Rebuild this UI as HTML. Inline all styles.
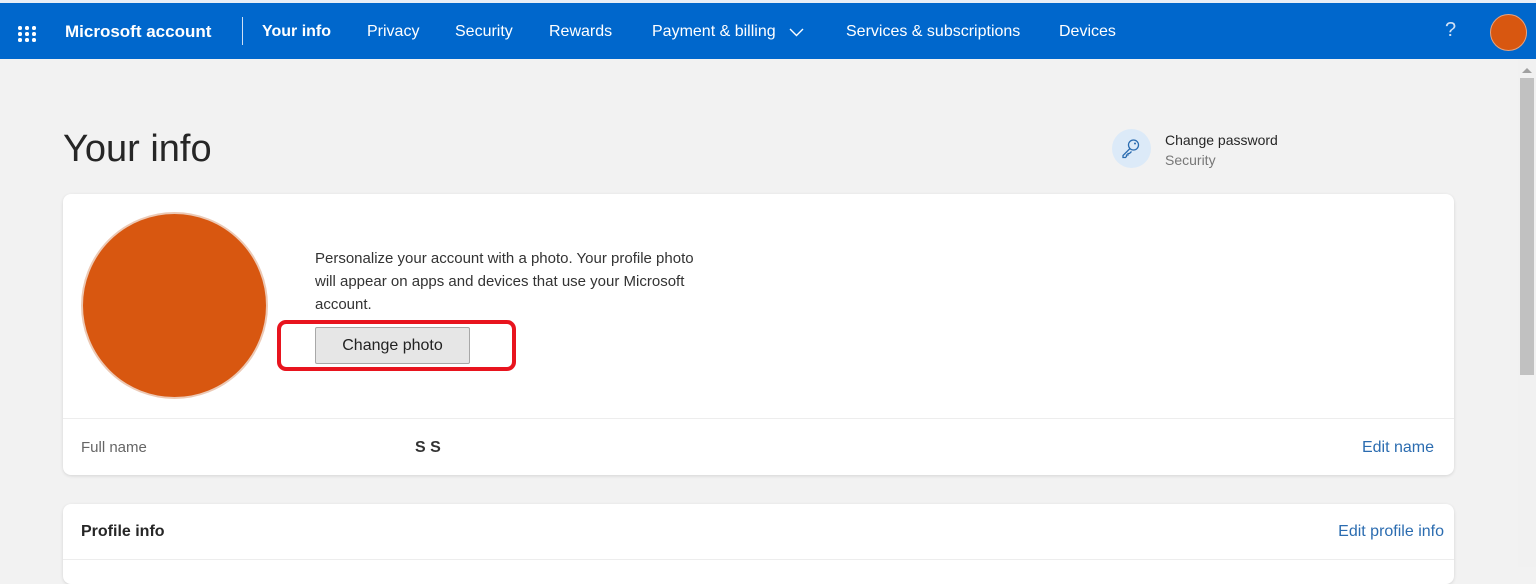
<!DOCTYPE html>
<html><head><style>
*{margin:0;padding:0;box-sizing:border-box}
body{width:1536px;height:567px;overflow:hidden;background:#f2f2f2;font-family:"Liberation Sans",sans-serif;position:relative;color:#1b1b1b}
.top{position:absolute;left:0;top:0;width:1536px;height:3px;background:#e8eef6}
.nav{position:absolute;left:0;top:3px;width:1536px;height:56px;background:#0067cc;color:#fff}
.nav span{position:absolute;top:20px;font-size:16px;white-space:nowrap}
.dots{position:absolute;left:18px;top:23px;width:18px;height:18px}
.dots i{position:absolute;width:3.5px;height:3.5px;background:#fff;border-radius:50%}
.sep{position:absolute;left:242px;top:14px;width:1px;height:28px;background:#cfe0f5}
.av{position:absolute;left:1490px;top:11px;width:37px;height:37px;border-radius:50%;background:#d85710;border:1px solid #e8a27c}
.sb{position:absolute;left:1518px;top:59px;width:18px;height:508px;background:#f1f1f1}
.thumb{position:absolute;left:1520px;top:78px;width:14px;height:297px;background:#c1c1c1}
.card{position:absolute;left:63px;width:1391px;background:#fff;border-radius:8px;box-shadow:0 1px 3px rgba(0,0,0,.12)}
.t{position:absolute;white-space:nowrap}
.link{color:#2b6cb0;font-size:16px}
</style></head><body>
<div class="top"></div>
<div class="nav">
<div class="dots">
<i style="left:0;top:0"></i><i style="left:7px;top:0"></i><i style="left:14px;top:0"></i>
<i style="left:0;top:6px"></i><i style="left:7px;top:6px"></i><i style="left:14px;top:6px"></i>
<i style="left:0;top:12px"></i><i style="left:7px;top:12px"></i><i style="left:14px;top:12px"></i></div>
<span style="left:65px;font-size:17px;font-weight:bold;top:19px">Microsoft account</span>
<div class="sep"></div>
<span style="left:262px;font-weight:bold">Your info</span>
<span style="left:367px">Privacy</span>
<span style="left:455px">Security</span>
<span style="left:549px">Rewards</span>
<span style="left:652px">Payment &amp; billing</span>
<svg style="position:absolute;left:789px;top:24px" width="15" height="10"><path d="M1 2l6.5 6.5L14 2" fill="none" stroke="#fff" stroke-width="1.4"/></svg>
<span style="left:846px">Services &amp; subscriptions</span>
<span style="left:1059px">Devices</span>
<span style="left:1445px;font-size:20px;top:16px;color:#cfe0f5">?</span>
<div class="av"></div>
</div>
<div class="sb"></div><div class="thumb"></div>
<svg style="position:absolute;left:1521px;top:66px" width="12" height="8"><path d="M1 7L6 2l5 5z" fill="#a0a0a0"/></svg>

<div class="t" style="left:63px;top:128px;font-size:38px;color:#262626">Your info</div>
<div style="position:absolute;left:1112px;top:129px;width:39px;height:39px;border-radius:50%;background:#dceaf8"></div>
<svg style="position:absolute;left:1120px;top:137px" width="22" height="22" viewBox="0 0 22 22"><circle cx="13.5" cy="8" r="5" fill="none" stroke="#2b6cb0" stroke-width="1.3"/><circle cx="15" cy="6.5" r="1" fill="#2b6cb0"/><path d="M10 11.5L3 18.5v2h2.5l1-1v-1.5h1.5v-1.5h1.5l2-2" fill="none" stroke="#2b6cb0" stroke-width="1.3"/></svg>
<div class="t" style="left:1165px;top:132px;font-size:14px;color:#262626">Change password</div>
<div class="t" style="left:1165px;top:152px;font-size:14px;color:#777">Security</div>

<div class="card" style="top:194px;height:281px">
<div style="position:absolute;left:18px;top:18px;width:187px;height:187px;border-radius:50%;background:#d85710;border:2px solid #ecc9b5"></div>
<div class="t" style="left:252px;top:53px;font-size:15px;line-height:23px;color:#333;white-space:normal;width:400px">Personalize your account with a photo. Your profile photo will appear on apps and devices that use your Microsoft account.</div>
<div style="position:absolute;left:214px;top:126px;width:239px;height:51px;border:4px solid #e8141e;border-radius:9px"></div>
<div style="position:absolute;left:252px;top:133px;width:155px;height:37px;background:#e6e6e6;border:1px solid #a8a8a8;border-radius:2px;font-size:16px;text-align:center;line-height:35px;color:#222">Change photo</div>
<div style="position:absolute;left:0;top:224px;width:100%;height:1px;background:#ededed"></div>
<div class="t" style="left:18px;top:245px;font-size:15px;color:#666">Full name</div>
<div class="t" style="left:352px;top:245px;font-size:16px;font-weight:bold;color:#333">S S</div>
<div class="t link" style="right:20px;top:245px">Edit name</div>
</div>

<div class="card" style="top:504px;height:80px">
<div class="t" style="left:18px;top:19px;font-size:16px;font-weight:bold;color:#262626">Profile info</div>
<div class="t link" style="right:10px;top:19px">Edit profile info</div>
<div style="position:absolute;left:0;top:55px;width:100%;height:1px;background:#ededed"></div>
</div>
</body></html>
